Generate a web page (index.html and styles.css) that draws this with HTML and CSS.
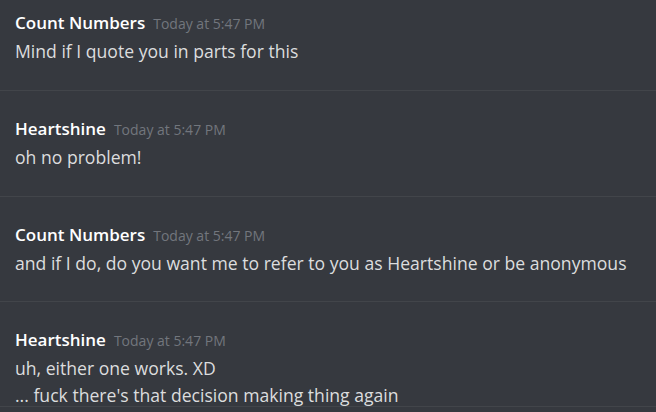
FILE: index.html
```html
<!DOCTYPE html>
<html>
<head>
<meta charset="utf-8">
<link rel="stylesheet" href="styles.css">
</head>
<body>
<div class="chat">
  <div class="group first">
    <div class="header"><span class="name">Count Numbers</span><span class="time">Today at 5:47 PM</span></div>
    <div class="line">Mind if I quote you in parts for this</div>
  </div>
  <div class="group tall">
    <div class="header"><span class="name">Heartshine</span><span class="time">Today at 5:47 PM</span></div>
    <div class="line">oh no problem!</div>
  </div>
  <div class="group">
    <div class="header"><span class="name">Count Numbers</span><span class="time">Today at 5:47 PM</span></div>
    <div class="line">and if I do, do you want me to refer to you as Heartshine or be anonymous</div>
  </div>
  <div class="group">
    <div class="header"><span class="name">Heartshine</span><span class="time">Today at 5:47 PM</span></div>
    <div class="line">uh, either one works. XD</div>
    <div class="line">... fuck there's that decision making thing again</div>
  </div>
</div>
</body>
</html>
```
FILE: styles.css
```css
html, body {
  margin: 0;
  padding: 0;
  background: #36393f;
  height: 100%;
  overflow: hidden;
}
.chat {
  font-family: "Open Sans", "Noto Sans", sans-serif;
  display: flex;
  flex-direction: column;
}
.group {
  padding: 27px 15px 0;
  height: 105px;
  flex-shrink: 0;
  box-sizing: border-box;
  border-bottom: 1px solid #42454a;
}
.group.first {
  padding-top: 12px;
  height: 91px;
}
.group.tall {
  height: 106px;
}
.header {
  display: flex;
  align-items: baseline;
  gap: 8px;
  line-height: 22px;
  margin-bottom: 3px;
}
.name {
  color: #ffffff;
  font-size: 17px;
  font-weight: 600;
}
.time {
  color: #72767d;
  font-size: 14px;
}
.line {
  color: #dcddde;
  font-size: 17.6px;
  line-height: 27px;
}
```
